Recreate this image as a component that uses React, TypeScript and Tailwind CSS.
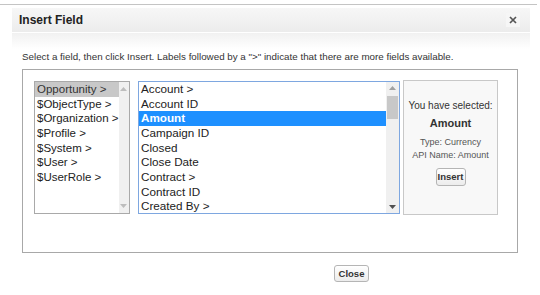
import React from "react";

const leftItems = ["Opportunity >", "$ObjectType >", "$Organization >", "$Profile >", "$System >", "$User >", "$UserRole >"];
const midItems = ["Account >", "Account ID", "Amount", "Campaign ID", "Closed", "Close Date", "Contract >", "Contract ID", "Created By >"];

function Up({ c }: { c: string }) {
  return (
    <svg width="7" height="4" viewBox="0 0 7 4"><polygon points="0,4 7,4 3.5,0" fill={c} /></svg>
  );
}
function Down({ c }: { c: string }) {
  return (
    <svg width="7" height="4" viewBox="0 0 7 4"><polygon points="0,0 7,0 3.5,4" fill={c} /></svg>
  );
}

export default function App() {
  return (
    <div className="w-[540px] h-[295px] bg-white overflow-hidden text-[#222]" style={{ fontFamily: '"Liberation Sans", Arial, sans-serif' }}>
      <div className="h-[4px]" />
      <div className="h-px bg-[#c4c4c4] mr-[3px]" />
      <div className="ml-[12px] w-[518px]">
        <div className="mt-[3px] h-[25px] flex items-center justify-between bg-gradient-to-b from-[#f7f7f7] to-[#ececec] border-b border-white">
          <span className="ml-[7px] text-[12px] font-bold text-[#222]">Insert Field</span>
          <div className="mr-[10px] w-[14px] h-[14px] bg-[#f6f6f6] flex items-center justify-center">
            <svg width="8" height="8" viewBox="0 0 8 8"><path d="M1 1L7 7M7 1L1 7" stroke="#555" strokeWidth="1.7" /></svg>
          </div>
        </div>
        <div className="h-[16px] bg-gradient-to-b from-[#f1f1f1] to-white" />
        <div className="ml-[10px] mt-[1px] text-[9.8px] text-[#333] leading-[14px] whitespace-nowrap">
          Select a field, then click Insert. Labels followed by a "&gt;" indicate that there are more fields available.
        </div>
        <div className="ml-[10px] mt-[5px] w-[496px] h-[184px] border border-[#a8a8a8] pl-[11px] pt-[11px] flex items-start">
          {/* left list */}
          <div className="w-[96px] h-[133px] border border-[#a9a9a9] flex bg-white">
            <div className="flex-1 flex flex-col">
              {leftItems.map((t, i) => (
                <div key={t} className={`h-[14.67px] leading-[14.67px] pl-[2px] text-[11.5px] whitespace-nowrap ${i === 0 ? "bg-[#c8c8c8] text-[#333]" : "text-[#222]"}`}>{t}</div>
              ))}
            </div>
            <div className="w-[11px] bg-[#f0f0f0] flex flex-col items-center justify-between py-[5px]">
              <Up c="#bdbdbd" />
              <Down c="#bdbdbd" />
            </div>
          </div>
          {/* middle list */}
          <div className="ml-[8px] w-[262px] h-[133px] border border-[#7ea7e0] flex bg-white">
            <div className="flex-1 flex flex-col">
              {midItems.map((t, i) => (
                <div key={t} className={`h-[14.67px] leading-[14.67px] pl-[2px] text-[11.7px] whitespace-nowrap ${i === 2 ? "bg-[#1e90ff] text-white font-bold" : "text-[#222]"}`}>{t}</div>
              ))}
            </div>
            <div className="w-[13px] bg-[#f0f0f0] flex flex-col items-center py-[4px]">
              <Up c="#a0a0a0" />
              <div className="mt-[6px] w-[11px] h-[23px] bg-[#c8c8c8]" />
              <div className="flex-1" />
              <Down c="#505050" />
            </div>
          </div>
          {/* right panel */}
          <div className="ml-[3px] -mt-[1px] w-[95px] h-[135px] border border-[#c8c8c8] bg-[#f8f8f8] flex flex-col items-center">
            <div className="mt-[18px] text-[10px] text-[#333] leading-[13px] whitespace-nowrap">You have selected:</div>
            <div className="mt-[5px] text-[11px] font-bold text-[#333] leading-[13px]">Amount</div>
            <div className="mt-[6px] text-[9px] text-[#555] leading-[12.5px] whitespace-nowrap">Type: Currency</div>
            <div className="text-[9px] text-[#555] leading-[12.5px] whitespace-nowrap">API Name: Amount</div>
            <button className="mt-[7px] w-[30px] h-[18px] border border-[#b5b5b5] rounded-[3px] bg-gradient-to-b from-white to-[#ececec] text-[9.5px] font-bold text-[#333] leading-none">Insert</button>
          </div>
        </div>
        <div className="mt-[12px] ml-[322px] flex">
          <button className="w-[35px] h-[17px] border border-[#b5b5b5] rounded-[3px] bg-gradient-to-b from-white to-[#ececec] text-[9.5px] font-bold text-[#333] leading-none">Close</button>
        </div>
      </div>
    </div>
  );
}
